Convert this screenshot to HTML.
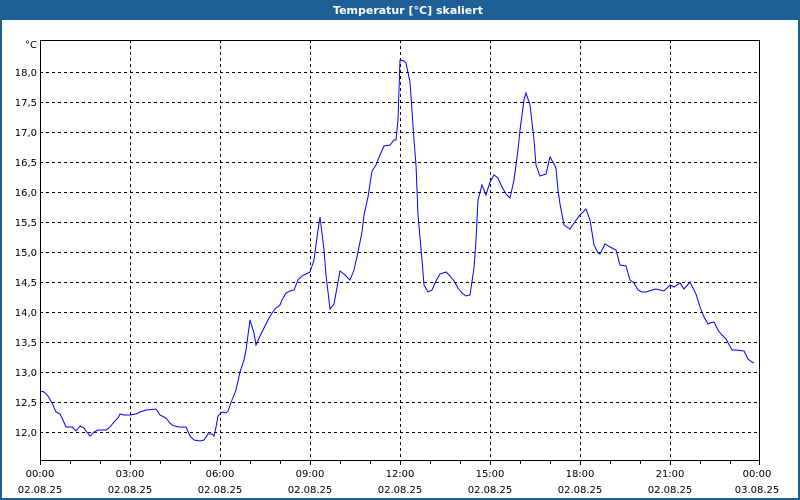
<!DOCTYPE html>
<html><head><style>
html,body{margin:0;padding:0;background:#fff;}
body{width:800px;height:500px;overflow:hidden;position:relative;font-family:"DejaVu Sans","Liberation Sans",sans-serif;}
</style></head><body>
<svg width="800" height="500" xmlns="http://www.w3.org/2000/svg" style="position:absolute;left:0;top:0">
<rect x="0" y="0" width="800" height="500" fill="#1e6096"/>
<rect x="2" y="20" width="796" height="478" fill="#fff"/>
<text x="408" y="14" fill="#fff" font-size="11" font-weight="bold" text-anchor="middle" font-family="DejaVu Sans, sans-serif">Temperatur [°C] skaliert</text>
<g stroke="#000" stroke-width="1" stroke-dasharray="3,3" fill="none" shape-rendering="crispEdges">
<path d="M130.5 40V460M220.5 40V460M310.5 40V460M400.5 40V460M490.5 40V460M580.5 40V460M670.5 40V460"/>
<path d="M40 72.5H760M40 102.5H760M40 132.5H760M40 162.5H760M40 192.5H760M40 222.5H760M40 252.5H760M40 282.5H760M40 312.5H760M40 342.5H760M40 372.5H760M40 402.5H760M40 432.5H760"/>
</g>
<g stroke="#000" stroke-width="1" fill="none" shape-rendering="crispEdges">
<rect x="40.5" y="40.5" width="719" height="420"/>
<path d="M40.5 460V465M70.5 460V464M100.5 460V464M130.5 460V465M160.5 460V464M190.5 460V464M220.5 460V465M250.5 460V464M280.5 460V464M310.5 460V465M340.5 460V464M370.5 460V464M400.5 460V465M430.5 460V464M460.5 460V464M490.5 460V465M520.5 460V464M550.5 460V464M580.5 460V465M610.5 460V464M640.5 460V464M670.5 460V465M700.5 460V464M730.5 460V464M759.5 460V465"/>
</g>
<g font-size="10" fill="#000" text-anchor="end" font-family="DejaVu Sans, sans-serif">
<text x="37" y="48">°C</text>
<text x="37" y="76">18,0</text><text x="37" y="106">17,5</text><text x="37" y="136">17,0</text><text x="37" y="166">16,5</text><text x="37" y="196">16,0</text><text x="37" y="226">15,5</text><text x="37" y="256">15,0</text><text x="37" y="286">14,5</text><text x="37" y="316">14,0</text><text x="37" y="346">13,5</text><text x="37" y="376">13,0</text><text x="37" y="406">12,5</text><text x="37" y="436">12,0</text>
</g>
<g font-size="10" fill="#000" text-anchor="middle" font-family="DejaVu Sans, sans-serif">
<text x="40" y="477">00:00</text><text x="40" y="493">02.08.25</text>
<text x="130" y="477">03:00</text><text x="130" y="493">02.08.25</text>
<text x="220" y="477">06:00</text><text x="220" y="493">02.08.25</text>
<text x="310" y="477">09:00</text><text x="310" y="493">02.08.25</text>
<text x="400" y="477">12:00</text><text x="400" y="493">02.08.25</text>
<text x="490" y="477">15:00</text><text x="490" y="493">02.08.25</text>
<text x="580" y="477">18:00</text><text x="580" y="493">02.08.25</text>
<text x="670" y="477">21:00</text><text x="670" y="493">02.08.25</text>
<text x="757" y="477">00:00</text><text x="757" y="493">03.08.25</text>
</g>
<polyline fill="none" stroke="#0000ff" stroke-width="1" points="40,391 44,392 48,396 52,403 56,412 60,414 62,418 66,427 72,427 76,431 80,426 84,428 86,431 90,436 94,432 98,430 106,430 110,427 114,422 118,418 120,414 124,415 130,415 136,414 140,412 146,410 156,409 160,415 166,418 170,423 172,425 178,427 186,427 190,436 194,440 200,441 204,440 208,434 212,434 214,436 216,427 218,416 222,412 226,413 228,411 232,400 236,390 240,372 244,360 246,350 250,320 254,333 256,345 260,336 264,328 268,320 272,313 276,308 280,305 282,300 286,293 290,291 294,290 298,280 302,276 310,272 314,260 318,230 320,217 324,250 326,275 330,309 334,304 338,282 340,271 344,274 350,280 354,270 358,252 362,232 364,215 368,197 372,171 376,165 380,155 384,146 390,145 394,140 396,140 398,120 400,60 404,61 406,63 410,82 414,140 416,165 418,215 422,260 424,285 428,292 432,290 436,281 440,274 446,272 450,276 454,281 458,288 462,293 466,296 470,295 474,268 476,240 478,200 482,185 486,195 490,182 494,175 498,178 502,187 506,194 510,198 514,180 518,150 520,130 524,100 526,93 530,105 534,140 536,165 540,176 546,174 550,157 554,164 556,168 558,190 560,204 564,225 570,229 574,223 580,215 586,209 590,220 594,245 598,253 600,254 605,244 610,247 616,250 620,265 626,266 630,280 634,283 638,290 642,292 646,292 652,290 656,289 664,291 668,287 670,285 674,287 680,283 684,289 690,282 696,294 700,307 704,317 708,324 710,323 714,322 718,330 722,335 726,339 732,350 736,350 744,351 748,359 752,362 754,363"/>
</svg>
</body></html>
